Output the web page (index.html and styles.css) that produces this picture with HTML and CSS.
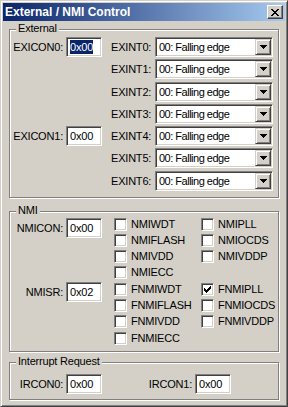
FILE: index.html
```html
<!DOCTYPE html>
<html lang="en">
  <head>
    <meta charset="UTF-8" />
    <title>External / NMI Control</title>
    <link rel="stylesheet" href="styles.css">
  </head>
  <body>
    <div class="window">
      <div class="titlebar">
        <span class="title">External / NMI Control</span>
        <div class="close">
          <svg width="8" height="7" viewBox="0 0 8 7" shape-rendering="crispEdges"><path d="M0 0h2v1h-2zM6 0h2v1h-2zM1 1h2v1h-2zM5 1h2v1h-2zM2 2h4v1h-4zM3 3h2v1h-2zM2 4h4v1h-4zM1 5h2v1h-2zM5 5h2v1h-2zM0 6h2v1h-2zM6 6h2v1h-2z" fill="#000"/></svg>
        </div>
      </div>

      <div class="content">
        <!-- External interrupts -->
        <div class="group group-ext">
          <span class="legend">External</span>
          <div class="ext-body">
            <div class="left-col">
              <div class="field">
                <span class="field-label">EXICON0:</span>
                <div class="edit"><span class="selected">0x00</span></div>
              </div>
              <div class="field field-exicon1">
                <span class="field-label">EXICON1:</span>
                <div class="edit">0x00</div>
              </div>
            </div>
            <div class="exint-col">
              <div class="exint-row"><span class="exint-label">EXINT0:</span><div class="combo"><span class="combo-text">00: Falling edge</span><span class="combo-btn"><svg width="7" height="4" viewBox="0 0 7 4" shape-rendering="crispEdges"><path d="M0 0h7v1h-1v1h-1v1h-1v1h-1v-1h-1v-1h-1v-1h-1z" fill="#000"/></svg></span></div></div>
              <div class="exint-row"><span class="exint-label">EXINT1:</span><div class="combo"><span class="combo-text">00: Falling edge</span><span class="combo-btn"><svg width="7" height="4" viewBox="0 0 7 4" shape-rendering="crispEdges"><path d="M0 0h7v1h-1v1h-1v1h-1v1h-1v-1h-1v-1h-1v-1h-1z" fill="#000"/></svg></span></div></div>
              <div class="exint-row"><span class="exint-label">EXINT2:</span><div class="combo"><span class="combo-text">00: Falling edge</span><span class="combo-btn"><svg width="7" height="4" viewBox="0 0 7 4" shape-rendering="crispEdges"><path d="M0 0h7v1h-1v1h-1v1h-1v1h-1v-1h-1v-1h-1v-1h-1z" fill="#000"/></svg></span></div></div>
              <div class="exint-row"><span class="exint-label">EXINT3:</span><div class="combo"><span class="combo-text">00: Falling edge</span><span class="combo-btn"><svg width="7" height="4" viewBox="0 0 7 4" shape-rendering="crispEdges"><path d="M0 0h7v1h-1v1h-1v1h-1v1h-1v-1h-1v-1h-1v-1h-1z" fill="#000"/></svg></span></div></div>
              <div class="exint-row"><span class="exint-label">EXINT4:</span><div class="combo"><span class="combo-text">00: Falling edge</span><span class="combo-btn"><svg width="7" height="4" viewBox="0 0 7 4" shape-rendering="crispEdges"><path d="M0 0h7v1h-1v1h-1v1h-1v1h-1v-1h-1v-1h-1v-1h-1z" fill="#000"/></svg></span></div></div>
              <div class="exint-row"><span class="exint-label">EXINT5:</span><div class="combo"><span class="combo-text">00: Falling edge</span><span class="combo-btn"><svg width="7" height="4" viewBox="0 0 7 4" shape-rendering="crispEdges"><path d="M0 0h7v1h-1v1h-1v1h-1v1h-1v-1h-1v-1h-1v-1h-1z" fill="#000"/></svg></span></div></div>
              <div class="exint-row"><span class="exint-label">EXINT6:</span><div class="combo"><span class="combo-text">00: Falling edge</span><span class="combo-btn"><svg width="7" height="4" viewBox="0 0 7 4" shape-rendering="crispEdges"><path d="M0 0h7v1h-1v1h-1v1h-1v1h-1v-1h-1v-1h-1v-1h-1z" fill="#000"/></svg></span></div></div>
            </div>
          </div>
        </div>

        <!-- NMI -->
        <div class="group group-nmi">
          <span class="legend">NMI</span>
          <div class="nmi-body">
            <div class="left-col">
              <div class="field">
                <span class="field-label">NMICON:</span>
                <div class="edit">0x00</div>
              </div>
              <div class="field field-nmisr">
                <span class="field-label">NMISR:</span>
                <div class="edit">0x02</div>
              </div>
            </div>
            <div class="cb-grid">
              <div class="cb"><span class="box"></span>NMIWDT</div>
              <div class="cb"><span class="box"></span>NMIPLL</div>
              <div class="cb"><span class="box"></span>NMIFLASH</div>
              <div class="cb"><span class="box"></span>NMIOCDS</div>
              <div class="cb"><span class="box"></span>NMIVDD</div>
              <div class="cb"><span class="box"></span>NMIVDDP</div>
              <div class="cb"><span class="box"></span>NMIECC</div>
              <div></div>
              <div class="cb"><span class="box"></span>FNMIWDT</div>
              <div class="cb"><span class="box"><svg width="7" height="7" viewBox="0 0 7 7" shape-rendering="crispEdges"><path d="M6 0h1v1h-1zM5 1h2v1h-2zM0 2h1v1h-1zM4 2h3v1h-3zM0 3h2v1h-2zM3 3h3v1h-3zM0 4h5v1h-5zM1 5h3v1h-3zM2 6h1v1h-1z" fill="#000"/></svg></span>FNMIPLL</div>
              <div class="cb"><span class="box"></span>FNMIFLASH</div>
              <div class="cb"><span class="box"></span>FNMIOCDS</div>
              <div class="cb"><span class="box"></span>FNMIVDD</div>
              <div class="cb"><span class="box"></span>FNMIVDDP</div>
              <div class="cb"><span class="box"></span>FNMIECC</div>
            </div>
          </div>
        </div>

        <!-- Interrupt request -->
        <div class="group group-irq">
          <span class="legend">Interrupt Request</span>
          <div class="irq-body">
            <div class="field">
              <span class="field-label">IRCON0:</span>
              <div class="edit">0x00</div>
            </div>
            <div class="field">
              <span class="field-label field-label-wide">IRCON1:</span>
              <div class="edit">0x00</div>
            </div>
          </div>
        </div>
      </div>
    </div>
  </body>
</html>
```

FILE: styles.css
```css
body {
  margin: 0;
  font-family: "Liberation Sans", Arial, sans-serif;
  font-size: 11px;
  color: #000;
  background: #d4d0c8;
}
.window {
  box-sizing: border-box;
  width: 288px;
  height: 407px;
  background: #d4d0c8;
  border: 1px solid;
  border-color: #d4d0c8 #404040 #404040 #d4d0c8;
  box-shadow: inset 1px 1px 0 #fff, inset -1px -1px 0 #808080;
  padding: 2px;
  display: flex;
  flex-direction: column;
}
.titlebar {
  height: 18px;
  display: flex;
  align-items: center;
  justify-content: space-between;
  padding: 0 2px;
  background: linear-gradient(to right, #0a246a, #a6caf0);
}
.title {
  color: #fff;
  font-weight: bold;
  font-size: 12px;
}
.close {
  box-sizing: border-box;
  width: 16px;
  height: 14px;
  background: #d4d0c8;
  border: 1px solid;
  border-color: #fff #404040 #404040 #fff;
  box-shadow: inset -1px -1px 0 #808080;
  display: flex;
  align-items: center;
  justify-content: center;
}
.close svg {
  display: block;
  margin-left: -1px;
}
.content {
  padding: 8px 6px 0 6px;
  letter-spacing: -0.2px;
}
.group {
  position: relative;
  border: 1px solid #808080;
  box-shadow: inset 1px 1px 0 #fff, 1px 1px 0 #fff;
}
.legend {
  position: absolute;
  top: -8px;
  left: 6px;
  padding: 0 2px;
  line-height: 13px;
  background: #d4d0c8;
}
.group-ext {
  padding: 7px 0 6px 0;
}
.group-nmi {
  margin-top: 13px;
  padding: 6px 0 6px 0;
}
.group-irq {
  margin-top: 10px;
  padding: 11px 0 5px 0;
}
.ext-body,
.nmi-body,
.irq-body {
  display: flex;
}
.left-col {
  width: 92px;
  display: flex;
  flex-direction: column;
}
.field {
  display: flex;
  align-items: center;
  height: 20px;
}
.field-exicon1 {
  margin-top: 69px;
}
.field-nmisr {
  margin-top: 44px;
}
.field-label {
  box-sizing: border-box;
  width: 56px;
  padding-right: 3px;
  text-align: right;
}
.field-label-wide {
  width: 93px;
}
.edit {
  box-sizing: border-box;
  width: 36px;
  height: 20px;
  padding: 0 3px;
  line-height: 18px;
  background: #fff;
  border: 1px solid;
  border-color: #808080 #fff #fff #808080;
  box-shadow: inset 1px 1px 0 #404040, inset -1px -1px 0 #d4d0c8;
}
.selected {
  background: #0a246a;
  color: #fff;
  padding: 1px 0;
}
.exint-col {
  margin-left: 9px;
  display: flex;
  flex-direction: column;
  gap: 2.25px;
}
.exint-row {
  display: flex;
  align-items: center;
  height: 20px;
}
.exint-label {
  width: 44px;
}
.combo {
  box-sizing: border-box;
  width: 118px;
  height: 20px;
  padding: 1px;
  display: flex;
  background: #fff;
  border: 1px solid;
  border-color: #808080 #fff #fff #808080;
  box-shadow: inset 1px 1px 0 #404040, inset -1px -1px 0 #d4d0c8;
}
.combo-text {
  flex: 1;
  padding-left: 2px;
  line-height: 16px;
  letter-spacing: -0.5px;
}
.combo-btn {
  box-sizing: border-box;
  width: 16px;
  height: 16px;
  background: #d4d0c8;
  border: 1px solid;
  border-color: #d4d0c8 #404040 #404040 #d4d0c8;
  box-shadow: inset 1px 1px 0 #fff, inset -1px -1px 0 #808080;
  display: flex;
  align-items: center;
  justify-content: center;
}
.combo-btn svg {
  display: block;
}
.cb-grid {
  margin-left: 12px;
  display: grid;
  grid-template-columns: 87px 87px;
  grid-template-rows: repeat(8, 13px);
  row-gap: 3.3px;
}
.cb {
  display: flex;
  align-items: center;
  height: 13px;
  line-height: 13px;
}
.box {
  box-sizing: border-box;
  width: 13px;
  height: 13px;
  margin-right: 4px;
  padding: 2px 0 0 2px;
  background: #fff;
  border: 1px solid;
  border-color: #808080 #fff #fff #808080;
  box-shadow: inset 1px 1px 0 #404040, inset -1px -1px 0 #d4d0c8;
}
.box svg {
  display: block;
}
```
